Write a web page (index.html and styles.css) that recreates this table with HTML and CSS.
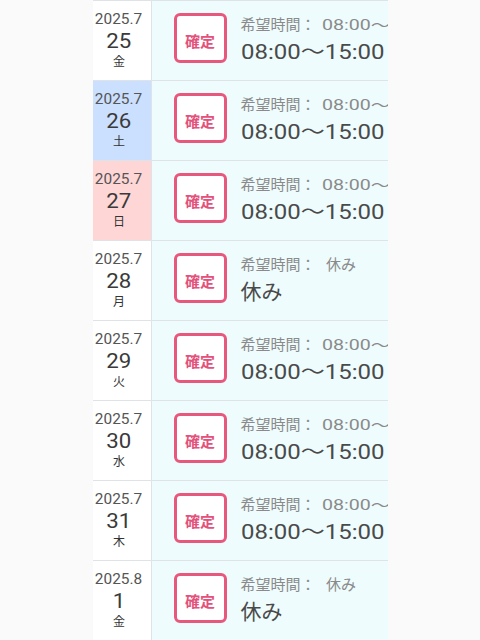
FILE: index.html
```html
<!DOCTYPE html>
<html lang="ja">
<head>
<meta charset="utf-8">
<link rel="stylesheet" href="styles.css">
</head>
<body>
<div class="list">
  <div class="row">
    <div class="date"><span class="ym">2025.7</span><span class="day">25</span><span class="wd">金</span></div>
    <div class="info"><div class="badge">確定</div><div class="times"><div class="req">希望時間： <span class="num">08:00〜15:00</span></div><div class="fix"><span class="num">08:00〜15:00</span></div></div></div>
  </div>
  <div class="row">
    <div class="date sat"><span class="ym">2025.7</span><span class="day">26</span><span class="wd">土</span></div>
    <div class="info"><div class="badge">確定</div><div class="times"><div class="req">希望時間： <span class="num">08:00〜15:00</span></div><div class="fix"><span class="num">08:00〜15:00</span></div></div></div>
  </div>
  <div class="row">
    <div class="date sun"><span class="ym">2025.7</span><span class="day">27</span><span class="wd">日</span></div>
    <div class="info"><div class="badge">確定</div><div class="times"><div class="req">希望時間： <span class="num">08:00〜15:00</span></div><div class="fix"><span class="num">08:00〜15:00</span></div></div></div>
  </div>
  <div class="row">
    <div class="date"><span class="ym">2025.7</span><span class="day">28</span><span class="wd">月</span></div>
    <div class="info"><div class="badge">確定</div><div class="times"><div class="req">希望時間： <span class="rest">休み</span></div><div class="fix">休み</div></div></div>
  </div>
  <div class="row">
    <div class="date"><span class="ym">2025.7</span><span class="day">29</span><span class="wd">火</span></div>
    <div class="info"><div class="badge">確定</div><div class="times"><div class="req">希望時間： <span class="num">08:00〜15:00</span></div><div class="fix"><span class="num">08:00〜15:00</span></div></div></div>
  </div>
  <div class="row">
    <div class="date"><span class="ym">2025.7</span><span class="day">30</span><span class="wd">水</span></div>
    <div class="info"><div class="badge">確定</div><div class="times"><div class="req">希望時間： <span class="num">08:00〜15:00</span></div><div class="fix"><span class="num">08:00〜15:00</span></div></div></div>
  </div>
  <div class="row">
    <div class="date"><span class="ym">2025.7</span><span class="day">31</span><span class="wd">木</span></div>
    <div class="info"><div class="badge">確定</div><div class="times"><div class="req">希望時間： <span class="num">08:00〜15:00</span></div><div class="fix"><span class="num">08:00〜15:00</span></div></div></div>
  </div>
  <div class="row">
    <div class="date"><span class="ym">2025.8</span><span class="day">1</span><span class="wd">金</span></div>
    <div class="info"><div class="badge">確定</div><div class="times"><div class="req">希望時間： <span class="rest">休み</span></div><div class="fix">休み</div></div></div>
  </div>
</div>
</body>
</html>
```
FILE: styles.css
```css
html, body {
  margin: 0;
  padding: 0;
  background: #fafafa;
  height: 640px;
  overflow: hidden;
}
body {
  font-family: Roboto, "Noto Sans CJK JP", sans-serif;
}
.list {
  width: 295px;
  margin: 0 auto;
}
.row {
  display: grid;
  grid-template-columns: 59px 1fr;
  height: 79px;
  border-top: 1px solid #dde3e6;
}
.date {
  background: #ffffff;
  border-right: 1px solid #dde3e6;
  display: flex;
  flex-direction: column;
  align-items: center;
  padding: 9px 5px 0 0;
  color: #444;
}
.date.sat { background: #cbdfff; }
.date.sun { background: #ffd6d6; }
.ym {
  font-size: 14px;
  line-height: 18px;
  color: #555;
  display: inline-block;
  transform: scaleX(1.1);
}
.day {
  margin-top: 1px;
  font-size: 21px;
  line-height: 25px;
  color: #3a3a3a;
  display: inline-block;
  transform: scaleX(1.06);
}
.wd {
  font-family: "Noto Sans CJK JP", sans-serif;
  font-size: 12px;
  line-height: 14px;
  color: #333;
}
.info {
  background: #effcfd;
  display: flex;
  align-items: flex-start;
  padding: 12px 0 0 22px;
  overflow: hidden;
}
.badge {
  flex: none;
  box-sizing: border-box;
  width: 53px;
  height: 50px;
  border: 3px solid #e8577c;
  border-radius: 6px;
  background: #fff;
  color: #e2527b;
  font-family: "Noto Sans CJK JP", sans-serif;
  font-weight: bold;
  font-size: 15px;
  display: flex;
  align-items: center;
  justify-content: center;
  padding-top: 4px;
}
.times {
  margin-left: 14px;
  white-space: nowrap;
  font-family: "Noto Sans CJK JP", sans-serif;
  padding-top: 1px;
}
.req {
  font-size: 15px;
  line-height: 20px;
  color: #8a8a8a;
}
.req .num {
  font-family: Roboto, "Noto Sans CJK JP", sans-serif;
  font-size: 14px;
  line-height: 1;
  display: inline-block;
  transform-origin: left center;
  transform: scaleX(1.4);
  margin-left: 3px;
}
.req .rest {
  margin-left: 7px;
}
.fix {
  font-size: 21px;
  line-height: 32px;
  color: #4a4a4a;
}
.fix .num {
  font-family: Roboto, "Noto Sans CJK JP", sans-serif;
  font-size: 20px;
  line-height: 1;
  display: inline-block;
  transform-origin: left center;
  transform: scaleX(1.2);
}
```
